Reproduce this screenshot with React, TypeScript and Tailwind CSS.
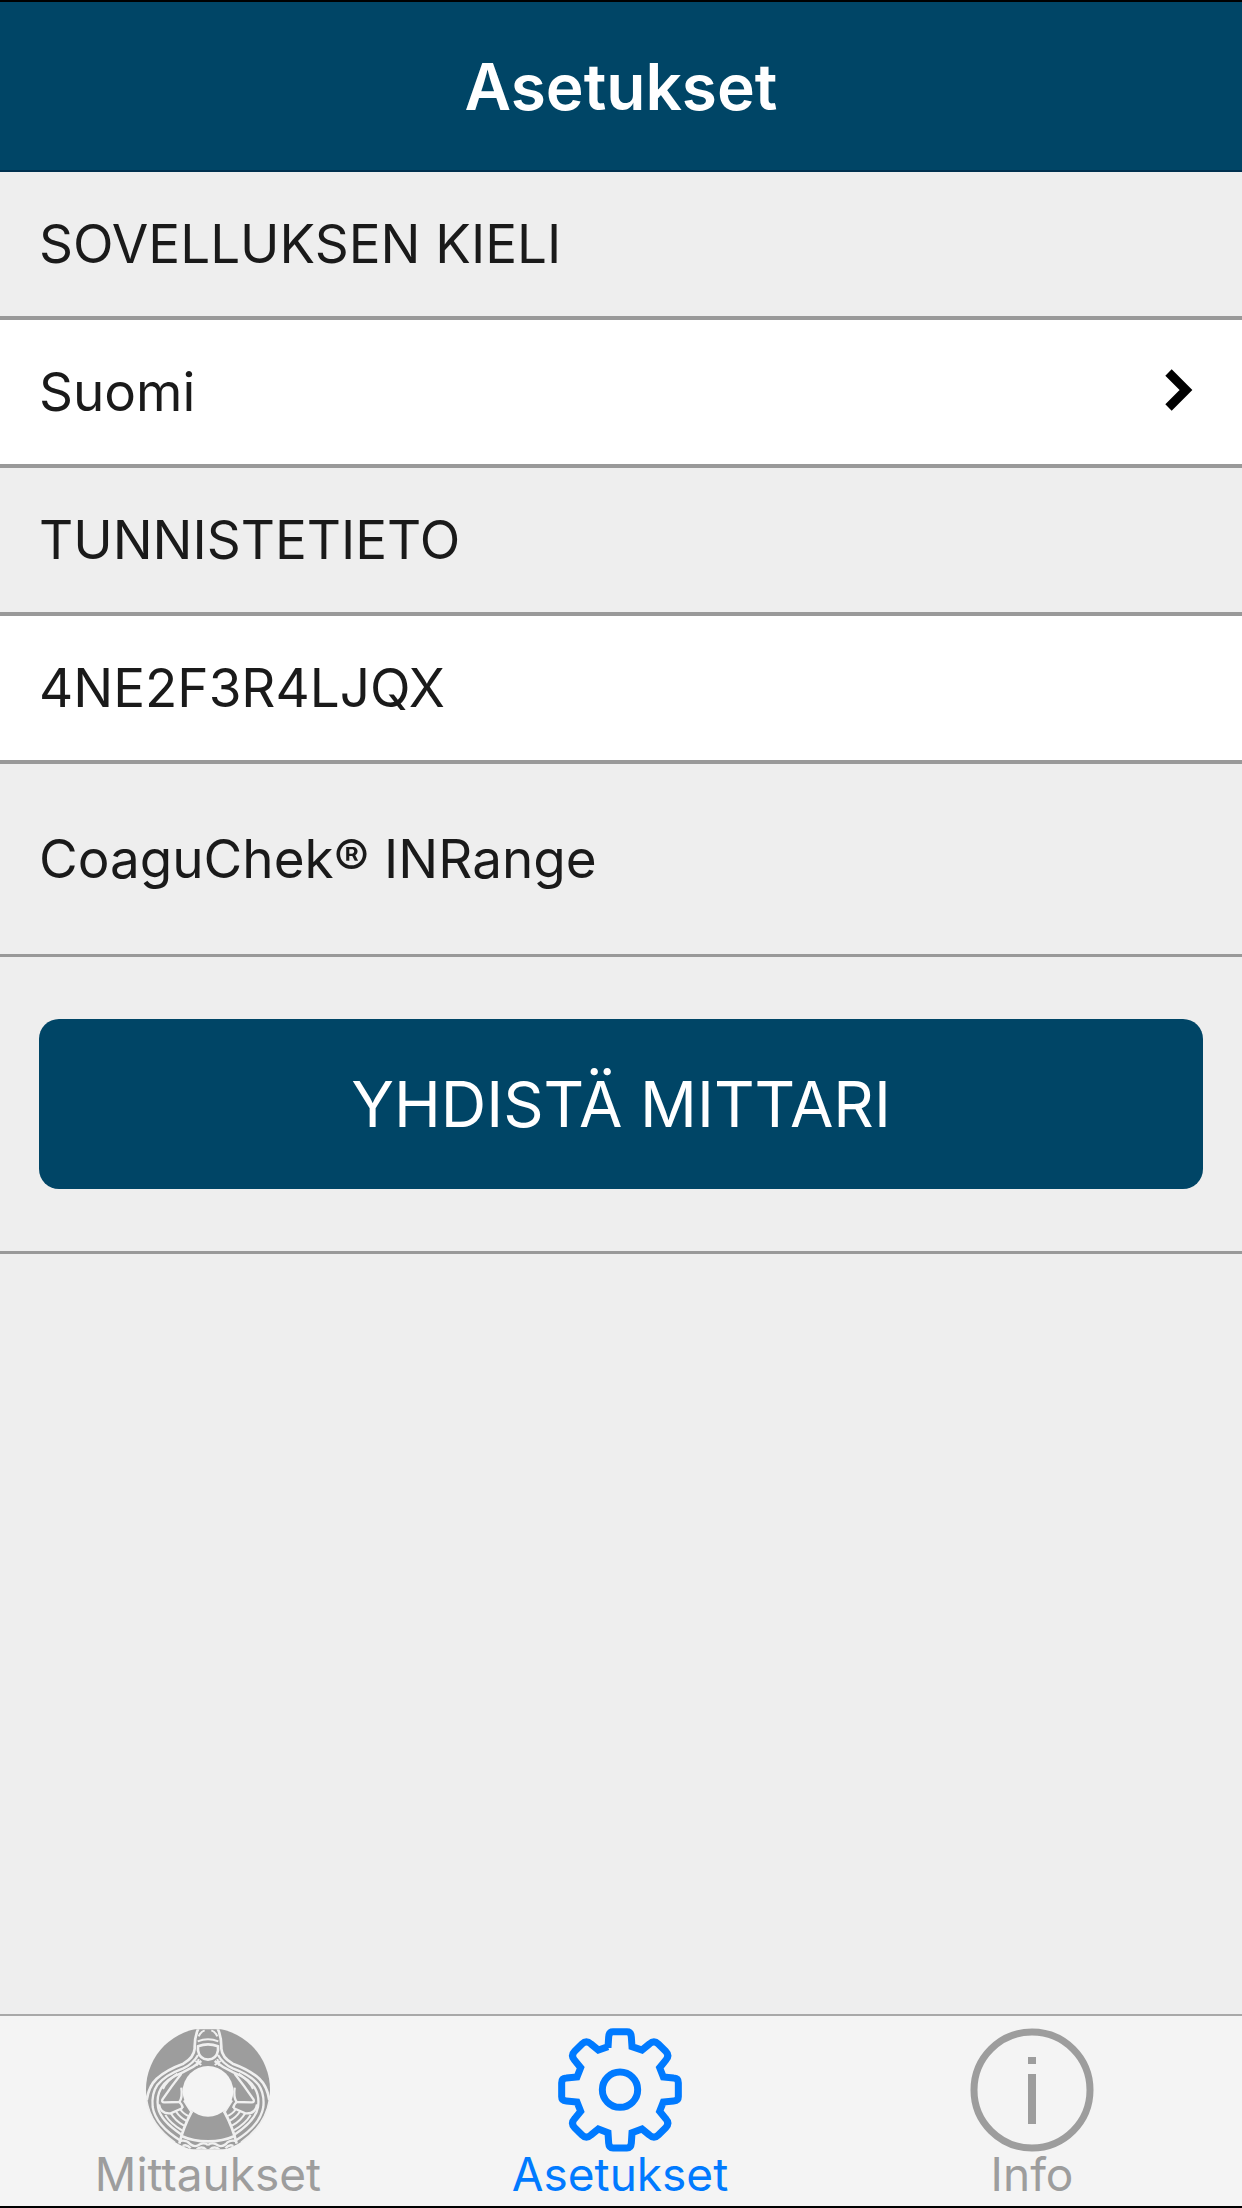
import React from "react";

const ROW = "flex w-full items-center border-b-4 border-[#999999] px-[39px] py-[42px] text-left text-[53px] leading-[60px]";

function ChevronIcon() {
  return (
    <svg viewBox="0 0 28 42" className="h-[42px] w-7" fill="none" stroke="#000000" strokeWidth="9" aria-hidden="true">
      <path d="M3.500 3.500 L21 21 L3.500 38.500" />
    </svg>
  );
}

function GearIcon() {
  return (
    <svg viewBox="51 53 372 372" className="size-[124px]" fill="none" stroke="currentColor" strokeWidth="21" aria-hidden="true">
      <circle cx="237" cy="238" r="53" />
      <path d="M201 112 L203 80 Q204 64 216 64 H258 Q270 64 271 80 L273 109 L303 119 L325 101 Q339 88 352 101 L374 123 Q387 136 374 150 L356 172 L367 200 L398 203 Q412 204 412 217 V259 Q412 271 398 272 L367 275 L356 303 L374 325 Q387 339 374 352 L352 374 Q339 387 325 374 L303 356 L273 367 L271 398 Q270 413 258 413 H216 Q204 413 203 398 L201 367 L172 356 L150 374 Q136 387 123 374 L101 352 Q88 339 101 325 L119 303 L108 275 L76 272 Q62 271 62 259 V217 Q62 204 76 203 L108 200 L119 172 L101 150 Q88 136 101 123 L123 101 Q136 88 150 101 L172 119 L201 109 Z" />
    </svg>
  );
}

function InfoIcon() {
  return (
    <svg viewBox="0 0 124 124" className="size-[124px]" fill="none" stroke="currentColor" aria-hidden="true">
      <circle cx="62" cy="62" r="58" strokeWidth="7" />
      <path d="M62 29 V36 M62 46 V96" strokeWidth="8" />
    </svg>
  );
}

// One half of the figure, mirrored for the other side
function FigureHalf() {
  return (
    <g fill="none" stroke="#f0f0f0" strokeWidth="7">
      <path d="M205 55 Q193 80 194 115 Q192 142 160 160 Q110 178 80 205 Q56 228 50 270" strokeWidth="8" />
      <path d="M50 270 Q62 345 135 396" strokeWidth="5" />
      <path d="M204 134 Q190 160 160 174 Q105 194 82 224 Q64 250 68 290 Q77 345 152 391" />
      <path d="M214 152 Q190 172 158 186 Q108 206 93 234 Q79 258 84 290 Q90 330 155 373" />
      <path d="M154 190 Q126 225 97 268 Q94 277 104 276 L148 275 Q158 262 154 232" />
      <path d="M142 190 Q108 214 99 236" strokeWidth="6" />
      <path d="M87 282 Q92 312 122 309 L158 293" />
      <path d="M148 275 Q158 284 158 293 M162 270 L186 308" />
      <path d="M186 302 Q160 350 148 400" strokeWidth="8" />
      <path d="M106 314 Q122 340 156 360 M122 308 Q136 332 162 346 M137 302 Q150 322 170 332 M150 296 Q161 312 178 318" strokeWidth="6" />
      <path d="M152 376 Q190 393 234 393" strokeWidth="8" />
      <path d="M150 392 Q170 388 180 401 Q194 413 210 402 Q222 395 234 404 M158 407 Q170 400 182 414 M200 417 Q216 406 228 418" strokeWidth="7" />
      <path d="M196 152 L214 164 M206 146 L200 166" strokeWidth="6" />
    </g>
  );
}

function MeasurementsIcon() {
  return (
    <svg viewBox="48 53 372 372" className="size-[124px]" aria-hidden="true">
      <clipPath id="disc">
        <path d="M48 57 H420 V417 H48 Z" />
      </clipPath>
      <g clipPath="url(#disc)">
        <circle cx="234" cy="238" r="186" fill="currentColor" />
        <FigureHalf />
        <g transform="matrix(-1 0 0 1 468 0)">
          <FigureHalf />
        </g>
        <g stroke="#f0f0f0" strokeWidth="8" fill="currentColor">
          <path d="M204 108 Q234 96 264 108 V120 Q260 146 234 148 Q208 146 204 120 Z" />
          <path d="M203 93 Q234 80 265 93 M206 78 Q212 64 224 60 M262 78 Q256 64 244 60" fill="none" strokeWidth="6" />
        </g>
        <circle cx="234" cy="243" r="76" fill="#f4f4f4" />
      </g>
    </svg>
  );
}

const TABS = [
  { label: "Mittaukset", icon: <MeasurementsIcon />, active: false },
  { label: "Asetukset", icon: <GearIcon />, active: true },
  { label: "Info", icon: <InfoIcon />, active: false },
];

export default function App() {
  return (
    <div className="flex min-h-screen flex-col border-y-2 border-black bg-[#eeeeee] font-['Inter',sans-serif] text-[#1a1a1a]">
      <header className="border-b-2 border-[#00304f] bg-[#004566] pt-[45px] pb-[43px] text-center text-white">
        <h1 className="text-[64px] leading-[80px] font-semibold">Asetukset</h1>
      </header>

      <main className="flex-1">
        <h2 className={ROW}>SOVELLUKSEN KIELI</h2>
        <button type="button" className={`${ROW} cursor-pointer justify-between bg-white`}>
          Suomi
          <span className="pr-[10px] pb-1">
            <ChevronIcon />
          </span>
        </button>
        <h2 className={ROW}>TUNNISTETIETO</h2>
        <p className={`${ROW} bg-white`}>4NE2F3R4LJQX</p>

        <h2 className="border-b-3 border-[#999999] px-[39px] py-[65px] text-[53px] leading-[60px]">
          CoaguChek® INRange
        </h2>
        <div className="border-b-3 border-[#999999] px-[39px] py-[62px]">
          <button
            type="button"
            className="w-full cursor-pointer rounded-[20px] bg-[#004566] py-[45px] text-[63px] leading-[80px] text-white"
          >
            YHDISTÄ MITTARI
          </button>
        </div>
      </main>

      <nav className="grid grid-cols-3 border-t-2 border-[#a8a8a8] bg-[#f4f4f4] pt-3 pr-1 pb-[10px] pl-[2px]">
        {TABS.map((tab) => (
          <button
            key={tab.label}
            type="button"
            aria-current={tab.active ? "page" : undefined}
            className={`flex cursor-pointer flex-col items-center text-[46px] leading-[44px] ${
              tab.active ? "text-[#007aff]" : "text-[#9d9d9d]"
            }`}
          >
            {tab.icon}
            {tab.label}
          </button>
        ))}
      </nav>
    </div>
  );
}
